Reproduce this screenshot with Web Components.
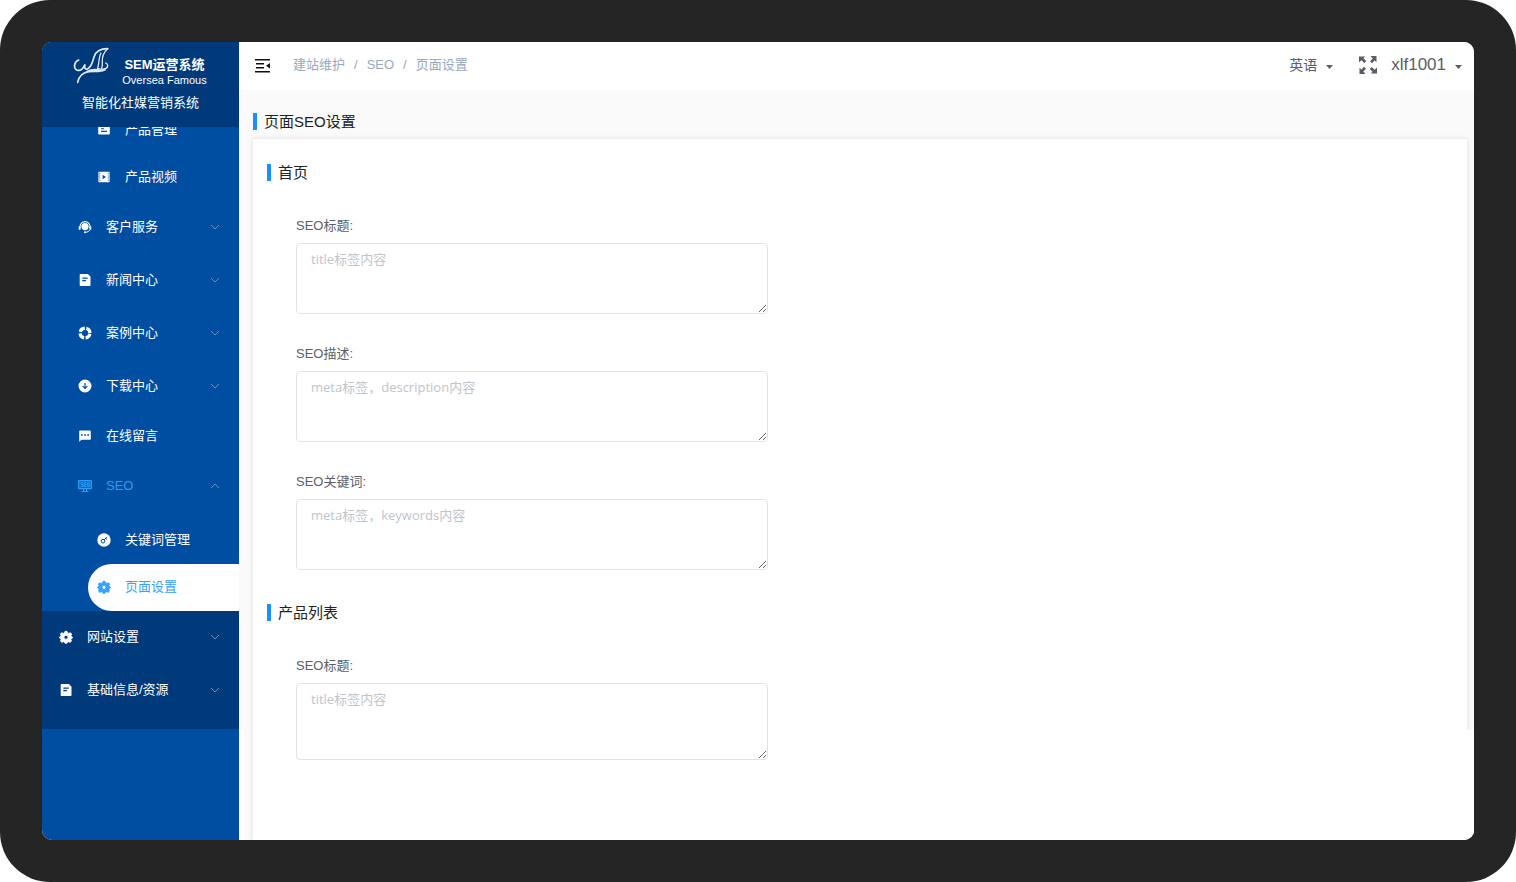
<!DOCTYPE html>
<html lang="zh-CN">
<head>
<meta charset="utf-8">
<meta name="viewport" content="width=device-width, initial-scale=1">
<title>页面SEO设置</title>
<style>
  html, body { margin: 0; height: 100%; background: #fff; }
  body { font: 13px/20px "Liberation Sans", "Noto Sans CJK SC", sans-serif; color: #5a5e66; }
</style>
</head>
<body>
<device-frame>
  <side-nav slot="nav">
    <nav-item level="3" icon="card">产品管理</nav-item>
    <nav-item level="3" icon="video">产品视频</nav-item>
    <nav-item level="2" icon="service" arrow="down">客户服务</nav-item>
    <nav-item level="2" icon="doc" arrow="down">新闻中心</nav-item>
    <nav-item level="2" icon="ring" arrow="down">案例中心</nav-item>
    <nav-item level="2" icon="download" arrow="down">下载中心</nav-item>
    <nav-item level="2" icon="chat">在线留言</nav-item>
    <nav-item level="2" icon="seo" arrow="up" open>SEO</nav-item>
    <nav-item level="3" icon="key">关键词管理</nav-item>
    <nav-item level="3" icon="gear" active>页面设置</nav-item>
    <nav-item slot="root" level="1" icon="gear" arrow="down">网站设置</nav-item>
    <nav-item slot="root" level="1" icon="doc" arrow="down">基础信息/资源</nav-item>
  </side-nav>
  <top-bar slot="top"></top-bar>
  <seo-page>
    <bar-title slot="title">页面SEO设置</bar-title>
    <seo-section>
      <bar-title slot="title">首页</bar-title>
      <seo-field label="SEO标题:" hint="title标签内容"></seo-field>
      <seo-field label="SEO描述:" hint="meta标签，description内容"></seo-field>
      <seo-field label="SEO关键词:" hint="meta标签，keywords内容"></seo-field>
    </seo-section>
    <seo-section>
      <bar-title slot="title">产品列表</bar-title>
      <seo-field label="SEO标题:" hint="title标签内容" tall></seo-field>
    </seo-section>
  </seo-page>
</device-frame>

<script>
const define = (name, html, init) => {
  const template = document.createElement('template');
  template.innerHTML = html;
  customElements.define(name, class extends HTMLElement {
    constructor() {
      super();
      this.attachShadow({ mode: 'open' }).append(template.content.cloneNode(true));
    }
    connectedCallback() { if (init) init(this, this.shadowRoot); }
  });
};

const ICONS = {
  card: '<path fill="currentColor" fill-rule="evenodd" d="M2 2.500h10a.8.8 0 0 1 .8.8v7.400a.8.8 0 0 1-.8.8H2a.8.8 0 0 1-.8-.8V3.300a.8.8 0 0 1 .8-.8zM4 5.200v1h3v-1zM4 7.800v1.200h6V7.800z"/>',
  video: '<path fill="currentColor" fill-rule="evenodd" d="M2 1.800h10q.6 0 .6.600v9.200q0 .600-.6.600H2q-.6 0-.6-.600V2.400q0-.600.6-.600zM5.600 4.800v4.400L9 7zM2.200 3.200v1h1v-1zm0 2.200v1h1v-1zm0 2.200v1h1v-1zm0 2.200v1h1v-1zM10.800 3.200v1h1v-1zm0 2.200v1h1v-1zm0 2.200v1h1v-1zm0 2.200v1h1v-1z"/>',
  service: '<circle cx="7" cy="6.600" r="3.600" fill="currentColor"/><path d="M2 8.500V6.600a5 5 0 0 1 10 0v1.900" fill="none" stroke="currentColor" stroke-width="1.100"/><path d="M1.600 6.500v3.200M12.400 6.500v3.200" stroke="currentColor" stroke-width="1.800"/><path d="M12 9.500q-1 2.700-4.500 2.900" fill="none" stroke="currentColor"/><circle cx="7" cy="12.300" r="1" fill="currentColor"/>',
  doc: '<path fill="currentColor" fill-rule="evenodd" d="M2.500 1h7.300l2.700 2.600v8.600a.8.8 0 0 1-.8.8H2.500a.8.8 0 0 1-.8-.8V1.800a.8.8 0 0 1 .8-.8zM4.300 4.600v1.200h5.400V4.600zM4.300 7.100v1.200h3.600V7.100z"/>',
  ring: '<circle cx="7" cy="7" r="4.900" fill="none" stroke="currentColor" stroke-width="3.200" stroke-dasharray="6.100 1.597" stroke-dashoffset="-.800"/>',
  download: '<path fill="currentColor" fill-rule="evenodd" d="M7 .500a6.500 6.500 0 1 1 0 13 6.500 6.500 0 0 1 0-13zM6.400 4v4.100L5 6.700l-.8.800L7 10.300l2.800-2.800-.8-.800-1.400 1.400V4z"/>',
  chat: '<path fill="currentColor" fill-rule="evenodd" d="M2 1.500h10a.8.8 0 0 1 .8.8V10a.8.8 0 0 1-.8.8H3.500l-2.300 2V2.300a.8.8 0 0 1 .8-.8zM3 5.300v1.500h1.700V5.300zm3.150 0v1.500h1.700V5.300zm3.150 0v1.500H11V5.300z"/>',
  seo: '<path fill="currentColor" opacity=".35" d="M1 2h12v7.500H1z"/><rect x=".600" y="1.600" width="12.800" height="8" rx=".6" fill="none" stroke="currentColor" stroke-width="1.200"/><path d="M5 3.700H3.200v1.800h1.600v2H2.800M8.200 3.700H6.300v3.800h1.900M6.300 5.600h1.900M9.700 3.700h1.600v3.800H9.700zM3.500 12.500h7M5.500 10v2.200M8.500 10v2.200" fill="none" stroke="currentColor"/>',
  key: '<circle cx="7" cy="7" r="6.700" fill="currentColor"/><g fill="none" stroke="#004ea2"><circle cx="6" cy="8.200" r="1.800"/><path d="M7.200 6.900l2.600-3M8.700 5.300l1.300 1"/></g>',
  gear: '<path fill="currentColor" fill-rule="evenodd" stroke="currentColor" stroke-width=".8" stroke-linejoin="round" d="M6 1.300h2l.5 1.500 1.300.6 1.600-.7 1.300 1.400-.7 1.500.5 1 .9.400v1l-1.100.7-.4.900.6 1.500-1.400 1.300-1.500-.700-1.100.500-.5 1.100H6l-.5-1.100-1.100-.5-1.500.7-1.400-1.300.6-1.500-.4-.9L.6 8V7l.9-.4.5-1-.7-1.500 1.300-1.400 1.600.7 1.300-.6zM7 5.300a2 2 0 1 0 0 4 2 2 0 0 0 0-4z"/>'
};

define('device-frame', `
  <style>
    :host { display: flex; box-sizing: border-box; min-height: 100vh; padding: 42px; background: #252525; border-radius: 50px; }
    .screen { flex: 1; display: grid; grid-template: auto 1fr / 197px 1fr; min-width: 0; background: #fff; border-radius: 10px; overflow: hidden; }
    ::slotted([slot=nav]) { grid-row: 1 / 3; }
  </style>
  <div class="screen"><slot name="nav"></slot><slot name="top"></slot><slot></slot></div>`);

define('side-nav', `
  <style>
    :host { display: flex; flex-direction: column; background: #004ea2; color: #fff; }
    header { position: relative; z-index: 1; box-sizing: border-box; height: 85px; padding-top: 5px; background: #003a7a; text-align: center; }
    .brand { display: grid; grid-template-columns: 36px 88px; column-gap: 12px; justify-content: center; height: 46px; }
    svg { width: 36px; height: 37px; }
    .names { display: grid; grid-template-rows: 16px 14px; padding-top: 10px; white-space: nowrap; }
    b { font-size: 13px; line-height: 16px; }
    small { font-size: 11px; line-height: 14px; }
    p { margin: 0; line-height: 20px; }
    /* the list is scrolled a little way under the header */
    nav { margin-top: -20px; }
    .root { padding-bottom: 12px; background: #003a7a; }
  </style>
  <header>
    <div class="brand">
      <svg viewBox="108 32 108 111" fill="none" stroke="#dfe9f5" stroke-linecap="round" aria-hidden="true">
        <path stroke-width="5" d="M125 71c-13 5-17 23-6 30 12 5 20-5 25-17-2 10 0 17 7 14 12-5 16-20 20-36 5-17 20-25 41-25"/>
        <path stroke-width="4" d="M212 37c-14 12-17 29-16 42 1 9 0 14-3 19M192 50c-7 12-5 28-10 46M206 80c9 4 8 15-4 18-8 2-14 0-20-2"/>
        <path stroke-width="5" d="M122 138c4-19 14-29 34-32 20-2 36 1 48-6M146 109c12-10 27-10 42-8"/>
      </svg>
      <div class="names"><b>SEM运营系统</b><small>Oversea Famous</small></div>
    </div>
    <p>智能化社媒营销系统</p>
  </header>
  <nav>
    <slot></slot>
    <div class="root"><slot name="root"></slot></div>
  </nav>`);

define('nav-item', `
  <style>
    :host { display: block; --h: 47px; --indent: 36px; }
    :host([arrow]) { --h: 53px; }
    :host([level="1"]) { --indent: 17px; }
    :host([level="3"]) { --indent: 55px; }
    :host([open]) { color: #2b9df4; padding-bottom: 4px; }
    .row { display: flex; align-items: center; gap: 14px; box-sizing: border-box; width: 100%; height: var(--h); padding: 0 19px 2px var(--indent);
      border: 0; background: none; color: inherit; font: inherit; text-align: left; text-decoration: none; white-space: nowrap; cursor: pointer; }
    span { padding-top: 1px; }
    .icon { flex: none; width: 14px; height: 14px; }
    .arrow { width: 10px; height: 10px; margin-left: auto; color: #6f8fb6; }
    :host([arrow=up]) .arrow { transform: scaleY(-1); }
    :host([active]) { padding-left: 46px; --indent: 9px; color: #35a3fb; }
    :host([active]) .row { background: #fff; border-radius: 24px 0 0 24px; }
  </style>`, (host, root) => {
  const arrow = host.getAttribute('arrow');
  const row = document.createElement(arrow ? 'button' : 'a');
  row.className = 'row';
  if (arrow) { row.type = 'button'; row.setAttribute('aria-expanded', String(arrow === 'up')); }
  else row.href = '#';
  row.innerHTML = `<svg class="icon" viewBox="0 0 14 14" aria-hidden="true">${ICONS[host.getAttribute('icon')]}</svg><span><slot></slot></span>` +
    (arrow ? '<svg class="arrow" viewBox="0 0 10 10" aria-hidden="true"><path d="M1 3l4 4 4-4" fill="none" stroke="currentColor"/></svg>' : '');
  root.append(row);
});

define('top-bar', `
  <style>
    :host { display: flex; align-items: center; box-sizing: border-box; height: 48px; padding: 0 12px 2px 16px; background: #fff; }
    button { display: flex; align-items: center; padding: 0; border: 0; background: none; color: #5a5e66; font: inherit; cursor: pointer; }
    ol { display: flex; margin: 0 auto 0 23px; padding: 0; list-style: none; }
    li + li::before { content: "/"; margin: 0 9px; }
    ol, a { color: #97a8be; text-decoration: none; }
    button.user, button.lang { gap: 9px; }
    button.lang { margin-right: 26px; font-size: 14px; }
    button.user { margin-left: 14px; font-size: 17px; }
    .caret { width: 7px; height: 4px; margin-top: 4px; }
  </style>
  <button type="button" aria-label="收起菜单">
    <svg width="15" height="15" viewBox="0 0 15 15" fill="#111"><path d="M0 1h15v1.500H0zM1 5h8v1.500H1zM1 9h8v1.500H1zM0 13h15v1.500H0zM15 5v5.500l-4-2.750z"/></svg>
  </button>
  <ol><li><a href="#">建站维护</a></li><li><a href="#">SEO</a></li><li>页面设置</li></ol>
  <button type="button" class="lang">英语<svg class="caret" viewBox="0 0 7 4"><path fill="#5a5e66" d="M0 0h7L3.500 4z"/></svg></button>
  <button type="button" aria-label="全屏">
    <svg width="18" height="18" viewBox="0 0 18 18"><defs><path id="q" d="M0 .500h6.200L4.500 2.300l2.800 2.700-2 2-2.900-2.700L0 6.500z"/></defs>
      <g fill="#5a5e66"><use href="#q"/><use href="#q" transform="rotate(90 9 9)"/><use href="#q" transform="rotate(180 9 9)"/><use href="#q" transform="rotate(270 9 9)"/></g></svg>
  </button>
  <button type="button" class="user">xlf1001<svg class="caret" viewBox="0 0 7 4"><path fill="#5a5e66" d="M0 0h7L3.500 4z"/></svg></button>`);

define('bar-title', `
  <style>
    :host { display: block; color: #222; }
    h2 { display: flex; align-items: center; gap: 7px; height: 17px; margin: 0; font-size: 15px; font-weight: 400; line-height: 17px; }
    h2::before { content: ""; width: 4px; height: 17px; background: #1890ff; }
  </style>
  <h2><slot></slot></h2>`);

define('seo-page', `
  <style>
    :host { position: relative; display: flex; flex-direction: column; gap: 9px; padding: 23px 7px 0 14px; background: #fafafa; }
    main { flex: 1; padding: 25px 14px 34px; background: #fff; box-shadow: 0 0 5px rgba(0, 0, 0, .12); }
    /* the page background stops short of the bottom of the screen */
    :host::before, :host::after { content: ""; position: absolute; bottom: 0; height: 110px; background: #fff; }
    :host::before { left: 0; width: 5px; }
    :host::after { right: 0; width: 7px; }
  </style>
  <slot name="title"></slot>
  <main><slot></slot></main>`);

define('seo-section', `
  <style>
    :host { display: block; }
    :host(:not(:first-of-type)) { margin-top: 34px; }
    .fields { display: grid; gap: 29px; padding: 34px 0 0 29px; }
  </style>
  <slot name="title"></slot>
  <div class="fields"><slot></slot></div>`);

define('seo-field', `
  <style>
    :host { display: block; }
    label { display: block; line-height: 22px; margin-bottom: 6px; }
    textarea { display: block; box-sizing: border-box; width: 100%; max-width: 472px; height: 71px; margin: 0; padding: 5px 14px; border: 1px solid #dfe2e8; border-radius: 4px;
      background: #fff; color: #5a5e66; font: 13px/20px "Open Sans", "Noto Sans CJK SC", sans-serif; resize: vertical; }
    :host([tall]) textarea { height: 77px; }
    textarea::placeholder { color: #c0c4cc; opacity: 1; }
  </style>
  <label for="text"></label>
  <textarea id="text"></textarea>`, (host, root) => {
  root.querySelector('label').textContent = host.getAttribute('label');
  root.querySelector('textarea').placeholder = host.getAttribute('hint');
});
</script>
</body>
</html>
